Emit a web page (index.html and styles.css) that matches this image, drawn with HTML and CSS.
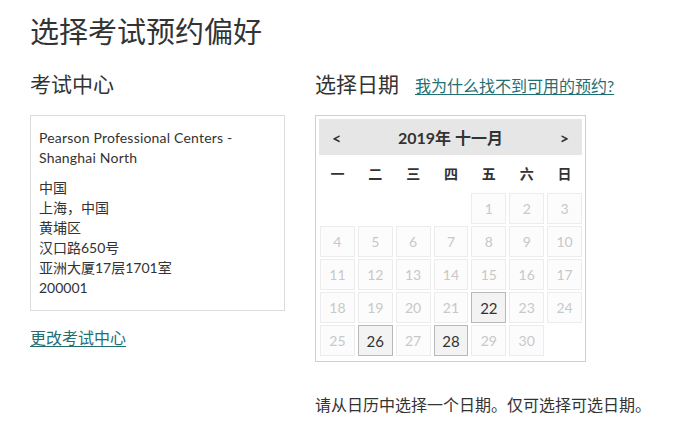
FILE: index.html
```html
<!DOCTYPE html>
<html lang="zh-CN">
<head>
<meta charset="utf-8">
<link rel="stylesheet" href="styles.css">
</head>
<body>
<div class="page">
  <h1 class="title">选择考试预约偏好</h1>
  <div class="columns">
    <section class="left">
      <h2 class="sub">考试中心</h2>
      <div class="center-box">
        <div class="center-name">Pearson Professional Centers -<br>Shanghai North</div>
        <div class="address">
          <div>中国</div>
          <div>上海，中国</div>
          <div>黄埔区</div>
          <div>汉口路650号</div>
          <div>亚洲大厦17层1701室</div>
          <div>200001</div>
        </div>
      </div>
      <a class="link change" href="#">更改考试中心</a>
    </section>
    <section class="right">
      <div class="right-head">
        <h2 class="sub">选择日期</h2>
        <a class="link why" href="#">我为什么找不到可用的预约?</a>
      </div>
      <div class="calendar">
        <div class="cal-head">
          <span class="nav">&lt;</span>
          <span class="month">2019年 十一月</span>
          <span class="nav">&gt;</span>
        </div>
        <div class="grid">
          <div class="wd">一</div><div class="wd">二</div><div class="wd">三</div><div class="wd">四</div><div class="wd">五</div><div class="wd">六</div><div class="wd">日</div>
          <div class="empty"></div><div class="empty"></div><div class="empty"></div><div class="empty"></div>
          <div class="day">1</div><div class="day">2</div><div class="day">3</div>
          <div class="day">4</div><div class="day">5</div><div class="day">6</div><div class="day">7</div><div class="day">8</div><div class="day">9</div><div class="day">10</div>
          <div class="day">11</div><div class="day">12</div><div class="day">13</div><div class="day">14</div><div class="day">15</div><div class="day">16</div><div class="day">17</div>
          <div class="day">18</div><div class="day">19</div><div class="day">20</div><div class="day">21</div><div class="day avail">22</div><div class="day">23</div><div class="day">24</div>
          <div class="day">25</div><div class="day avail">26</div><div class="day">27</div><div class="day avail">28</div><div class="day">29</div><div class="day">30</div>
        </div>
      </div>
      <p class="note">请从日历中选择一个日期。仅可选择可选日期。</p>
    </section>
  </div>
</div>
</body>
</html>
```
FILE: styles.css
```css
html, body {
  margin: 0;
  padding: 0;
  background: #fff;
}
body {
  font-family: Lato, "Noto Sans CJK SC", sans-serif;
  color: #333;
}
.page {
  padding: 12px 0 0 30px;
}
.title {
  margin: 0;
  font-size: 29px;
  line-height: 40px;
  font-weight: 400;
  color: #333;
}
.columns {
  display: flex;
  gap: 30px;
  margin-top: 17px;
}
.left {
  width: 255px;
  display: flex;
  flex-direction: column;
}
.sub {
  margin: 0;
  font-size: 21px;
  line-height: 30px;
  font-weight: 400;
  color: #333;
}
.center-box {
  margin-top: 16px;
  border: 1px solid #dcdcdc;
  padding: 12px 8px 12px 8px;
  font-size: 14px;
  line-height: 20px;
  color: #333;
}
.center-name {
  letter-spacing: 0.2px;
}
.address {
  margin-top: 10px;
}
.link {
  color: #1f6f73;
  text-decoration: underline;
  text-underline-offset: 2px;
}
.change {
  margin-top: 17px;
  font-size: 16px;
  line-height: 20px;
  align-self: flex-start;
}
.right {
  width: 330px;
  display: flex;
  flex-direction: column;
}
.right-head {
  display: flex;
  align-items: baseline;
  gap: 16px;
  white-space: nowrap;
}
.why {
  font-size: 16px;
}
.calendar {
  margin-top: 16px;
  width: 263px;
  border: 1px solid #cfcfcf;
  padding: 3px 3px 5px 3px;
}
.cal-head {
  height: 36px;
  background: #e6e6e6;
  display: flex;
  align-items: center;
  justify-content: space-between;
  padding: 0 13px 0 13px;
  font-size: 16px;
  font-weight: 700;
  color: #333;
}
.month {
  font-weight: 700;
}
.nav {
  font-weight: 700;
  font-size: 16px;
}
.grid {
  display: grid;
  grid-template-columns: repeat(7, 1fr);
  grid-auto-rows: 31px;
  grid-template-rows: 36px;
  column-gap: 3px;
  row-gap: 2px;
  padding: 0 0 0 1px;
}
.wd {
  display: flex;
  align-items: center;
  justify-content: center;
  font-size: 14px;
  font-weight: 700;
  color: #333;
}
.day {
  display: flex;
  align-items: center;
  justify-content: center;
  border: 1px solid #ececec;
  background: #fcfcfc;
  color: #c8c8c8;
  font-size: 14px;
}
.day.avail {
  border-color: #b8b8b8;
  background: #f3f3f3;
  color: #333;
  font-size: 15px;
}
.note {
  margin: 33px 0 0 0;
  font-size: 16px;
  line-height: 20px;
  color: #333;
  white-space: nowrap;
}
```
